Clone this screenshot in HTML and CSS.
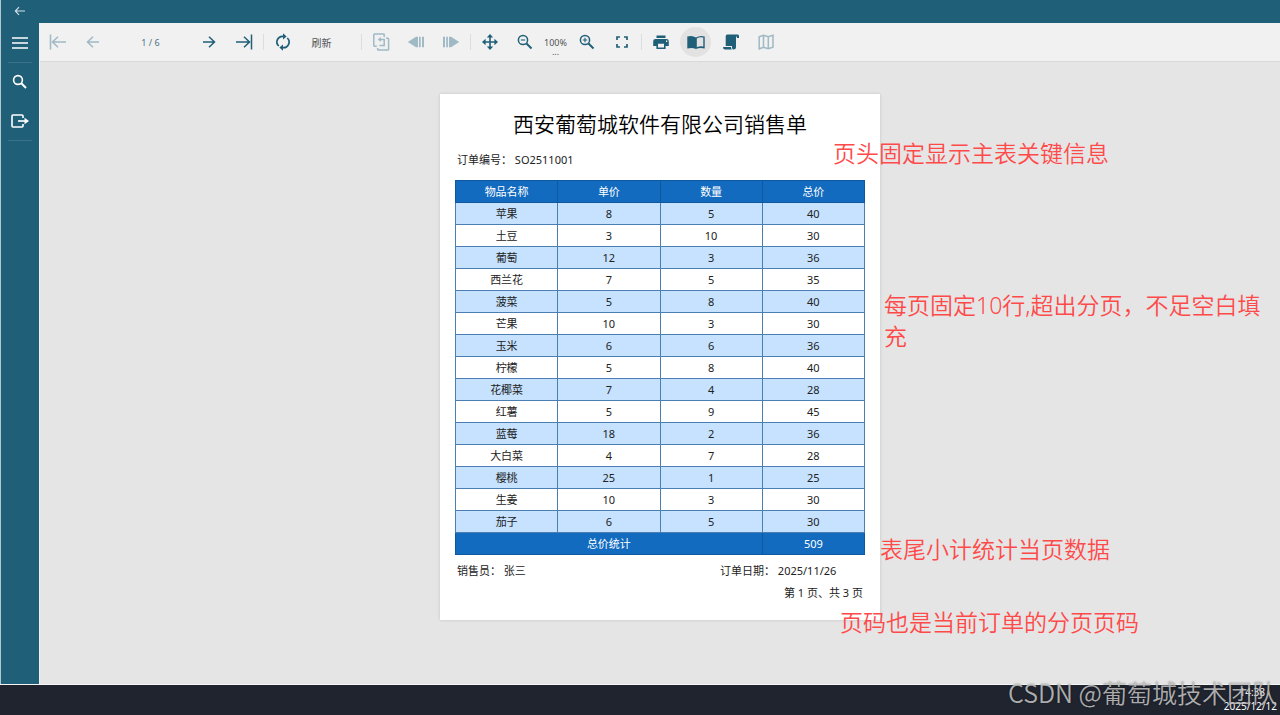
FILE: index.html
```html
<!DOCTYPE html>
<html lang="zh-CN">
<head>
    <meta charset="UTF-8">
    <meta name="viewport" content="width=device-width, initial-scale=1.0">
    <title>西安葡萄城软件有限公司销售单</title>
    <link rel="stylesheet" href="styles.css">
</head>
<body>
    <header class="topbar">
        <button class="back-btn" aria-label="返回">
            <svg width="12" height="10" viewBox="0 0 12 10"><path d="M11 5H1.5M5 1.2L1.3 5L5 8.8" fill="none" stroke="currentColor" stroke-width="1.1"/></svg>
        </button>
    </header>

    <div class="viewer">
        <nav class="sidebar">
            <button class="side-btn side-btn-line" aria-label="菜单">
                <svg width="20" height="20" viewBox="0 0 20 20"><path d="M2 5H18M2 10H18M2 15H18" stroke="currentColor" stroke-width="1.5"/></svg>
            </button>
            <button class="side-btn" aria-label="搜索">
                <svg width="20" height="20" viewBox="0 0 20 20"><g fill="none" stroke="currentColor"><circle cx="8" cy="8" r="4.4" stroke-width="1.6"/><path d="M11.3 11.3L16 16" stroke-width="2"/></g></svg>
            </button>
            <button class="side-btn side-btn-line" aria-label="导出">
                <svg width="20" height="20" viewBox="0 0 20 20"><path d="M13 7V5Q13 4 12 4H3Q2 4 2 5V15Q2 16 3 16H12Q13 16 13 15V13" fill="none" stroke="currentColor" stroke-width="1.6"/><path d="M8 10H16" stroke="currentColor" stroke-width="1.6"/><path d="M14.5 6.7L19 10L14.5 13.3Z" fill="currentColor"/></svg>
            </button>
        </nav>

        <div class="content">
            <div class="toolbar">
                <button class="tool-btn" aria-label="首页" disabled>
                    <svg width="20" height="20" viewBox="0 0 20 20"><path d="M2.5 2.5V17.5M18 10H4.5M10 4.8L4.5 10L10 15.2" fill="none" stroke="currentColor" stroke-width="1.5"/></svg>
                </button>
                <button class="tool-btn" aria-label="上一页" disabled>
                    <svg width="20" height="20" viewBox="0 0 20 20"><path d="M16 10H4.5M10 4.8L4.5 10L10 15.2" fill="none" stroke="currentColor" stroke-width="1.5"/></svg>
                </button>
                <input class="page-input" type="text" value="1 / 6" aria-label="页码">
                <button class="tool-btn" aria-label="下一页">
                    <svg width="20" height="20" viewBox="0 0 20 20"><path d="M4 10H15.5M10 4.8L15.5 10L10 15.2" fill="none" stroke="currentColor" stroke-width="1.5"/></svg>
                </button>
                <button class="tool-btn" aria-label="末页">
                    <svg width="20" height="20" viewBox="0 0 20 20"><path d="M17.5 2.5V17.5M2 10H15.5M10 4.8L15.5 10L10 15.2" fill="none" stroke="currentColor" stroke-width="1.5"/></svg>
                </button>
                <span class="sep"></span>
                <button class="tool-btn" aria-label="重新加载">
                    <svg width="20" height="20" viewBox="0 0 20 20"><g fill="none" stroke="currentColor" stroke-width="1.7"><path d="M5.7 14A5.6 5.6 0 0 1 10.5 4.4"/><path d="M14.3 6A5.6 5.6 0 0 1 9.5 15.6"/></g><path d="M10 1.2L13.6 4.4L10 7.6ZM10 12.4V18.8L6.4 15.6Z" fill="currentColor"/></svg>
                </button>
                <button class="text-btn">刷新</button>
                <span class="sep"></span>
                <button class="tool-btn" aria-label="返回父报表" disabled>
                    <svg width="20" height="20" viewBox="0 0 20 20"><g fill="none" stroke="currentColor" stroke-width="1.5"><path d="M5.8 14.2H3.5Q2.8 14.2 2.8 13.5V2.7Q2.8 2 3.5 2H12.5Q13.2 2 13.2 2.7V5"/><path d="M15 6.2H16.9Q17.6 6.2 17.6 7V17.2Q17.6 18 16.9 18H7.4Q6.7 18 6.7 17.2V16"/><path d="M9 7.6H13.2V13.4H8.5"/></g><path d="M6.8 7.6L9.8 5.1V10.1Z" fill="currentColor"/></svg>
                </button>
                <button class="tool-btn" aria-label="后退" disabled>
                    <svg width="20" height="20" viewBox="0 0 20 20"><path d="M1.8 10L10 4.8V15.2ZM10 4.8H12V15.2H10ZM13 4.8H14.7V15.2H13ZM16 4.8H18V15.2H16Z" fill="currentColor"/></svg>
                </button>
                <button class="tool-btn" aria-label="前进" disabled>
                    <svg width="20" height="20" viewBox="0 0 20 20"><path d="M18.2 10L10 4.8V15.2ZM2 4.8H4V15.2H2ZM5.2 4.8H6.9V15.2H5.2ZM8 4.8H10V15.2H8Z" fill="currentColor"/></svg>
                </button>
                <span class="sep"></span>
                <button class="tool-btn" aria-label="平移">
                    <svg width="20" height="20" viewBox="0 0 20 20"><path d="M10 4V16M4 10H16" stroke="currentColor" stroke-width="1.6"/><path d="M10 2L13.2 5.6H6.8ZM10 18L13.2 14.4H6.8ZM2 10L5.6 6.8V13.2ZM18 10L14.4 6.8V13.2Z" fill="currentColor"/></svg>
                </button>
                <button class="tool-btn" aria-label="缩小">
                    <svg width="20" height="20" viewBox="0 0 20 20"><g fill="none" stroke="currentColor"><circle cx="8" cy="8" r="4.6" stroke-width="1.5"/><path d="M11.5 11.5L16.5 16.5" stroke-width="2"/><path d="M5.8 8H10.2" stroke-width="1.1"/></g></svg>
                </button>
                <button class="zoom-btn" aria-label="缩放比例">100%<span class="zoom-dots">...</span></button>
                <button class="tool-btn" aria-label="放大">
                    <svg width="20" height="20" viewBox="0 0 20 20"><g fill="none" stroke="currentColor"><circle cx="8" cy="8" r="4.6" stroke-width="1.5"/><path d="M11.5 11.5L16.5 16.5" stroke-width="2"/><path d="M5.8 8H10.2M8 5.8V10.2" stroke-width="1.1"/></g></svg>
                </button>
                <button class="tool-btn" aria-label="全屏">
                    <svg width="20" height="20" viewBox="0 0 20 20"><path d="M5 8V5H8M12 5H15V8M15 12V15H12M8 15H5V12" fill="none" stroke="currentColor" stroke-width="1.7"/></svg>
                </button>
                <span class="sep"></span>
                <button class="tool-btn" aria-label="打印">
                    <svg width="20" height="20" viewBox="0 0 20 20"><path d="M5.5 3.5H14.5V6H5.5Z" fill="currentColor"/><path fill-rule="evenodd" d="M4.5 7H15.5Q17.8 7 17.8 9.3V14H14.6V17H5.4V14H2.2V9.3Q2.2 7 4.5 7ZM7 11.8V15.4H13V11.8ZM15 8.6V9.9H16.3V8.6Z" fill="currentColor"/></svg>
                </button>
                <button class="tool-btn tool-btn-active" aria-label="单页视图">
                    <svg width="20" height="20" viewBox="0 0 20 20"><path fill-rule="evenodd" d="M10 5.6Q6 2.8 1.3 4.6V16.6Q6 15 10 17Q14 15 18.7 16.6V4.6Q14 2.8 10 5.6ZM10.8 6.5Q13.6 4.7 17.3 5.6V14.6Q13.8 13.9 10.8 15.2Z" fill="currentColor"/></svg>
                </button>
                <button class="tool-btn" aria-label="连续视图">
                    <svg width="20" height="20" viewBox="0 0 20 20"><path d="M6.2 2.5H16.8Q18 2.5 18 4V6H15.8V4.5H15V15.2Q15 17.5 12.7 17.5Q11.3 17.5 11 16V14H4.7V4.3Q4.7 2.5 6.2 2.5ZM2 15H10Q10 16.8 11 17.5H4Q2 17.5 2 15Z" fill="currentColor"/></svg>
                </button>
                <button class="tool-btn" aria-label="多页视图" disabled>
                    <svg width="20" height="20" viewBox="0 0 20 20"><path d="M3.2 4.8L7.5 3.2L12.3 4.8L17 3.2V15.2L12.3 16.8L7.5 15.2L3.2 16.8ZM7.5 3.2V15.2M12.3 4.8V16.8" fill="none" stroke="currentColor" stroke-width="1.5"/></svg>
                </button>
            </div>

            <main class="canvas">
                <article class="paper">
                    <h1 class="paper-title">西安葡萄城软件有限公司销售单</h1>
                    <p class="order-no">订单编号： SO2511001</p>

                    <table class="order-table">
                        <thead>
                            <tr><th>物品名称</th><th>单价</th><th>数量</th><th>总价</th></tr>
                        </thead>
                        <tbody>
                            <tr><td>苹果</td><td>8</td><td>5</td><td>40</td></tr>
                            <tr><td>土豆</td><td>3</td><td>10</td><td>30</td></tr>
                            <tr><td>葡萄</td><td>12</td><td>3</td><td>36</td></tr>
                            <tr><td>西兰花</td><td>7</td><td>5</td><td>35</td></tr>
                            <tr><td>菠菜</td><td>5</td><td>8</td><td>40</td></tr>
                            <tr><td>芒果</td><td>10</td><td>3</td><td>30</td></tr>
                            <tr><td>玉米</td><td>6</td><td>6</td><td>36</td></tr>
                            <tr><td>柠檬</td><td>5</td><td>8</td><td>40</td></tr>
                            <tr><td>花椰菜</td><td>7</td><td>4</td><td>28</td></tr>
                            <tr><td>红薯</td><td>5</td><td>9</td><td>45</td></tr>
                            <tr><td>蓝莓</td><td>18</td><td>2</td><td>36</td></tr>
                            <tr><td>大白菜</td><td>4</td><td>7</td><td>28</td></tr>
                            <tr><td>樱桃</td><td>25</td><td>1</td><td>25</td></tr>
                            <tr><td>生姜</td><td>10</td><td>3</td><td>30</td></tr>
                            <tr><td>茄子</td><td>6</td><td>5</td><td>30</td></tr>
                        </tbody>
                        <tfoot>
                            <tr><td colspan="3">总价统计</td><td>509</td></tr>
                        </tfoot>
                    </table>

                    <div class="sign-row">
                        <span>销售员： 张三</span>
                        <span>订单日期： 2025/11/26</span>
                    </div>
                    <p class="page-no">第 1 页、共 3 页</p>

                    <p class="note note-header">页头固定显示主表关键信息</p>
                    <p class="note note-rows">每页固定10行,超出分页，不足空白填充</p>
                    <p class="note note-total">表尾小计统计当页数据</p>
                    <p class="note note-page">页码也是当前订单的分页页码</p>
                </article>
            </main>
        </div>
    </div>

    <footer class="taskbar">
        <div class="clock">
            <span class="clock-time">14:38</span>
            <span>2025/12/12</span>
        </div>
        <span class="watermark">CSDN @葡萄城技术团队</span>
    </footer>
</body>
</html>
```
FILE: styles.css
```css
* {
    box-sizing: border-box;
}
body {
    margin: 0;
    min-height: 100vh;
    display: flex;
    flex-direction: column;
    font-family: "Noto Sans", "Noto Sans CJK SC", sans-serif;
    font-size: 11px;
    color: #222;
    background: #e5e5e5;
}
h1, p {
    margin: 0;
    font-weight: 400;
}
button {
    border: none;
    padding: 0;
    background: none;
    font-family: inherit;
    color: inherit;
}
svg {
    display: block;
}

/* top bar and side bar */
.topbar {
    height: 23px;
    background: #205f78;
    border-left: 1px solid #b4c6ce;
}
.back-btn {
    width: 38px;
    height: 22px;
    display: flex;
    align-items: center;
    justify-content: center;
    color: #d5e2e8;
}
.viewer {
    flex: 1;
    display: flex;
}
.sidebar {
    width: 40px;
    display: flex;
    flex-direction: column;
    background: #205f78;
    border-left: 1px solid #b4c6ce;
    border-right: 1px solid #f1f1f1;
}
.side-btn {
    height: 38px;
    display: flex;
    align-items: center;
    justify-content: center;
    color: #fff;
}
.side-btn-line {
    height: 40px;
    margin: 0 7px;
    border-bottom: 1px solid #3b7289;
}

/* toolbar */
.content {
    flex: 1;
    display: flex;
    flex-direction: column;
}
.toolbar {
    height: 39px;
    display: flex;
    align-items: center;
    background: #f1f1f1;
    border-bottom: 1px solid #d9d9d9;
    color: #205f78;
}
.tool-btn {
    width: 35px;
    height: 30px;
    display: flex;
    align-items: center;
    justify-content: center;
}
.tool-btn:disabled {
    color: #9fb9c5;
}
.tool-btn-active {
    width: 31px;
    margin: 0 2px;
    border-radius: 50%;
    background: #e2e2e2;
}
.page-input {
    width: 81px;
    height: 30px;
    border: none;
    padding: 0;
    background: none;
    text-align: center;
    font-family: inherit;
    font-size: 9px;
    color: #4d7384;
}
.sep {
    width: 1px;
    height: 16px;
    margin: 0 1px 0 2px;
    background: #dcdcdc;
}
.text-btn {
    width: 43px;
    height: 30px;
    margin-right: 16px;
    font-size: 10px;
    color: #555;
}
.zoom-btn {
    position: relative;
    width: 27px;
    height: 30px;
    font-size: 9px;
    color: #555;
}
.zoom-dots {
    position: absolute;
    left: 0;
    right: 0;
    bottom: 0;
    line-height: 10px;
}

/* report page */
.canvas {
    flex: 1;
    padding: 32px 0 64px;
}
.paper {
    position: relative;
    width: 440px;
    margin: 0 auto;
    padding: 14px 15px 16px;
    background: #fff;
    box-shadow: 0 0 3px rgba(0, 0, 0, 0.15);
}
.paper-title {
    font-size: 21px;
    font-weight: 350;
    line-height: 32px;
    text-align: center;
    color: #000;
}
.order-no {
    padding: 0 2px;
    margin: 8px 0;
    line-height: 24px;
}
.order-table {
    width: 100%;
    table-layout: fixed;
    border-collapse: collapse;
    text-align: center;
}
.order-table th,
.order-table td {
    height: 22px;
    padding: 0;
    border: 1px solid #4b7fb2;
    font-weight: 400;
    line-height: 16px;
}
.order-table tbody tr:nth-child(odd) {
    background: #c6e2ff;
}
.order-table thead,
.order-table tfoot {
    background: #126bbf;
    color: #fff;
}
.order-table th,
.order-table tfoot td {
    border-color: #0e58a0;
}
.sign-row {
    display: grid;
    grid-template-columns: 263px 1fr;
    padding: 0 2px;
    margin-top: 5px;
    line-height: 22px;
}
.page-no {
    padding: 0 2px;
    line-height: 22px;
    text-align: right;
}

/* red notes laid over the page */
.note {
    position: absolute;
    font-size: 23px;
    line-height: 31px;
    font-weight: 350;
    color: #ff4a4a;
    white-space: nowrap;
}
.note-header {
    left: 393px;
    top: 44px;
}
.note-rows {
    left: 444px;
    top: 196px;
    width: 386px;
    white-space: normal;
}
.note-total {
    left: 440px;
    top: 440px;
}
.note-page {
    left: 400px;
    top: 513px;
}

/* taskbar */
.taskbar {
    position: relative;
    height: 31px;
    display: flex;
    justify-content: flex-end;
    background: #20242e;
    border-top: 1px solid #f5f5f5;
}
.clock {
    display: flex;
    flex-direction: column;
    align-items: flex-end;
    padding-right: 3px;
    font-size: 10px;
    line-height: 14px;
    color: #fff;
}
.clock-time {
    padding-right: 12px;
}
.watermark {
    position: absolute;
    right: 3px;
    bottom: 6px;
    font-family: "Noto Sans CJK SC", sans-serif;
    font-size: 25px;
    font-weight: 350;
    line-height: 34px;
    white-space: nowrap;
    color: rgba(200, 200, 200, 0.85);
    text-shadow: 0 0 2px rgba(0, 0, 0, 0.4);
}
```
